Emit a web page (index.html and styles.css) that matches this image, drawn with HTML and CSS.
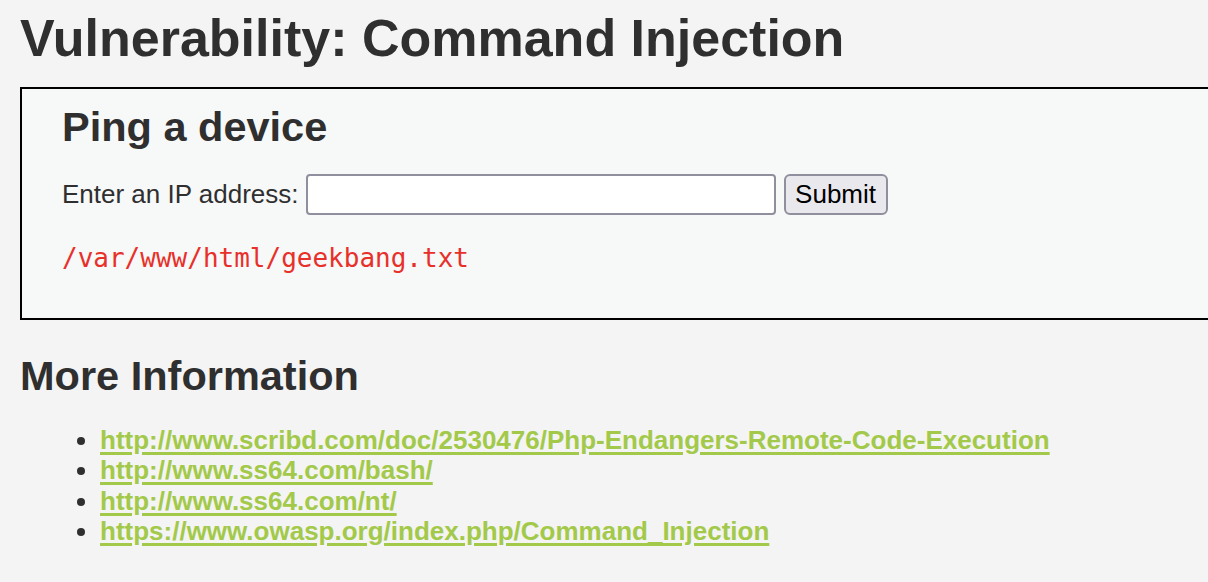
FILE: index.html
```html
<!DOCTYPE html>
<html>
<head>
<meta charset="utf-8">
<link rel="stylesheet" href="styles.css">
</head>
<body>
<div class="page">
  <h1 class="title">Vulnerability: Command Injection</h1>
  <div class="code-area">
    <h2 class="sub">Ping a device</h2>
    <form class="ping-form">
      <label class="label">Enter an IP address:</label>
      <input class="ip-input" type="text">
      <button class="submit" type="button">Submit</button>
    </form>
    <pre class="output">/var/www/html/geekbang.txt</pre>
  </div>
  <h2 class="more">More Information</h2>
  <ul class="links">
    <li><a href="#">http://www.scribd.com/doc/2530476/Php-Endangers-Remote-Code-Execution</a></li>
    <li><a href="#">http://www.ss64.com/bash/</a></li>
    <li><a href="#">http://www.ss64.com/nt/</a></li>
    <li><a href="#">https://www.owasp.org/index.php/Command_Injection</a></li>
  </ul>
</div>
</body>
</html>
```

FILE: styles.css
```css
html, body {
  margin: 0;
  padding: 0;
  overflow: hidden;
}
body {
  background: #f4f4f4;
  color: #2f2f2f;
  font-family: "Liberation Sans", Arial, sans-serif;
  font-size: 26px;
}
.page {
  padding: 8px 0 0 20px;
}
.title {
  margin: 0;
  font-size: 52px;
  font-weight: bold;
  line-height: 60px;
}
.code-area {
  margin-top: 19px;
  width: 1300px;
  border: 2px solid #000;
  background: #f7f8f8;
  padding: 14px 40px 0 40px;
  height: 233px;
  box-sizing: border-box;
}
.sub {
  margin: 0;
  font-size: 41.5px;
  line-height: 48px;
}
.ping-form {
  margin-top: 23px;
  display: flex;
  align-items: center;
}
.label {
  margin-right: 7px;
}
.ip-input {
  width: 470px;
  height: 41px;
  box-sizing: border-box;
  border: 2px solid #8f8f9d;
  border-radius: 4px;
  background: #fff;
  margin: 0 8px 0 0;
  padding: 0 4px;
  font-size: 26px;
}
.submit {
  height: 41px;
  width: 104px;
  box-sizing: border-box;
  border: 2px solid #8f8f9d;
  border-radius: 6px;
  background: #e9e9ed;
  color: #000;
  font-family: "Liberation Sans", Arial, sans-serif;
  font-size: 26px;
  padding: 0;
}
.output {
  margin: 28px 0 0 0;
  font-family: "DejaVu Sans Mono", monospace;
  font-size: 26px;
  color: #e8302a;
}
.more {
  margin: 32px 0 0 0;
  font-size: 41.5px;
  line-height: 48px;
}
.links {
  margin: 25px 0 0 0;
  padding-left: 80px;
  line-height: 30.3px;
}
.links li::marker {
  color: #2f2f2f;
}
.links a {
  color: #a3c94a;
  font-weight: bold;
  text-decoration-thickness: 3px;
  text-underline-offset: 3px;
}
```
